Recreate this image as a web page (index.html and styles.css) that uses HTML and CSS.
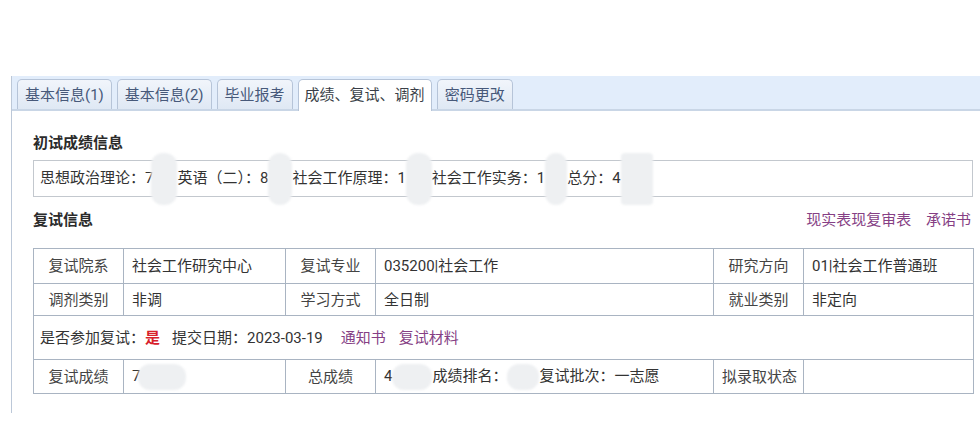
FILE: index.html
```html
<!DOCTYPE html>
<html lang="zh-CN">
<head>
    <meta charset="UTF-8">
    <meta name="viewport" content="width=device-width, initial-scale=1.0">
    <title>成绩、复试、调剂</title>
    <link rel="stylesheet" href="styles.css">
</head>
<body>
    <div class="panel">
        <div class="tabs">
            <span class="tab">基本信息(1)</span>
            <span class="tab">基本信息(2)</span>
            <span class="tab">毕业报考</span>
            <span class="tab active">成绩、复试、调剂</span>
            <span class="tab">密码更改</span>
        </div>

        <div class="content">
            <h3 class="title">初试成绩信息</h3>
            <div class="scores">
                思想政治理论：7<span class="mask m1"></span>英语（二）：8<span class="mask m2"></span>社会工作原理：1<span class="mask m3"></span>社会工作实务：1<span class="mask m4"></span>总分：4<span class="mask m5"></span>
            </div>

            <div class="title-row">
                <h3 class="title">复试信息</h3>
                <div class="links">
                    <a href="#">现实表现复审表</a>
                    <a href="#">承诺书</a>
                </div>
            </div>

            <table class="retest">
                <colgroup>
                    <col style="width: 90px">
                    <col style="width: 162px">
                    <col style="width: 90px">
                    <col style="width: 338px">
                    <col style="width: 90px">
                    <col>
                </colgroup>
                <tr class="r1">
                    <th>复试院系</th><td>社会工作研究中心</td>
                    <th>复试专业</th><td>035200|社会工作</td>
                    <th>研究方向</th><td>01|社会工作普通班</td>
                </tr>
                <tr class="r2">
                    <th>调剂类别</th><td>非调</td>
                    <th>学习方式</th><td>全日制</td>
                    <th>就业类别</th><td>非定向</td>
                </tr>
                <tr class="r3">
                    <td colspan="6" class="wide">
                        是否参加复试：<span class="yes">是</span><span class="date">提交日期：2023-03-19</span><a href="#" class="doc">通知书</a><a href="#" class="doc">复试材料</a>
                    </td>
                </tr>
                <tr class="r4">
                    <th>复试成绩</th><td>7<span class="mask m6"></span></td>
                    <th>总成绩</th><td>4<span class="mask m7"></span>成绩排名：<span class="mask m8"></span>复试批次：一志愿</td>
                    <th>拟录取状态</th><td></td>
                </tr>
            </table>
        </div>
    </div>
</body>
</html>
```

FILE: styles.css
```css
/* Base */
body {
    margin: 0;
    background: #fff;
    color: #333;
    font-family: Roboto, "Noto Sans CJK SC", sans-serif;
    font-size: 15px;
    line-height: 20px;
}
a {
    color: #863f85;
    text-decoration: none;
}

/* Panel with tab strip */
.panel {
    margin: 76px 0 0 11px;
    height: 337px;
    border-left: 1px solid #bcc8d8;
    box-sizing: border-box;
}
.tabs {
    height: 35px;
    display: flex;
    align-items: flex-end;
    gap: 5px;
    padding-left: 5px;
    background: #e2edfb;
    border-bottom: 2px solid #c9d6e6;
    box-sizing: border-box;
}
.tab {
    height: 30px;
    line-height: 30px;
    padding: 0 7px;
    border: 1px solid #b6c4d8;
    border-bottom: none;
    border-radius: 5px 5px 0 0;
    background: linear-gradient(#f1f5fb, #dfe8f4);
    color: #47597a;
    box-sizing: border-box;
}
.tab.active {
    background: #fff;
    color: #3a3f48;
    height: 32px;
    margin-bottom: -2px;
    padding: 0 6px;
}

/* Content */
.content {
    padding: 0 9px 0 21px;
}
.title {
    margin: 0;
    font-size: 15px;
    font-weight: bold;
    color: #2b2b2b;
}
.content > .title {
    padding-top: 22px;
}
.scores {
    margin-top: 7px;
    margin-right: -2px;
    height: 37px;
    line-height: 35px;
    padding-left: 6px;
    border: 1px solid #c3c8ce;
    box-sizing: border-box;
    white-space: nowrap;
}
.title-row {
    display: flex;
    justify-content: space-between;
    margin-top: 13px;
}
.links a {
    margin-left: 11px;
}

/* Blurred values */
.mask {
    display: inline-block;
    vertical-align: middle;
    background: #eef0f2;
    border-radius: 12px;
    filter: blur(1px);
}
.scores .mask {
    height: 52px;
    margin: -20px 0;
}
.m1 { width: 26px; margin-left: -2px !important; }
.m2 { width: 24px; }
.m3 { width: 26px; }
.m4 { width: 22px; }
.m5 { width: 32px; border-radius: 4px; }
.m6 { width: 48px; height: 26px; margin-left: -2px; }
.m7 { width: 40px; height: 26px; }
.m8 { width: 32px; height: 26px; }

/* Retest table */
.retest {
    margin-top: 18px;
    width: 941px;
    border-collapse: collapse;
    table-layout: fixed;
}
.retest th, .retest td {
    border: 1px solid #a9b4c2;
    padding: 0 8px;
    font-weight: normal;
    white-space: nowrap;
    overflow: hidden;
}
.retest th {
    text-align: center;
    color: #444;
}
.retest td {
    text-align: left;
}
.r1 { height: 35px; }
.r2 { height: 32px; }
.r3 { height: 44px; }
.r4 { height: 34px; }
.retest .wide {
    padding-left: 6px;
}
.yes {
    color: #d7202a;
    font-weight: bold;
}
.date {
    margin-left: 12px;
}
.doc {
    margin-left: 18px;
}
.doc + .doc {
    margin-left: 13px;
}
```
